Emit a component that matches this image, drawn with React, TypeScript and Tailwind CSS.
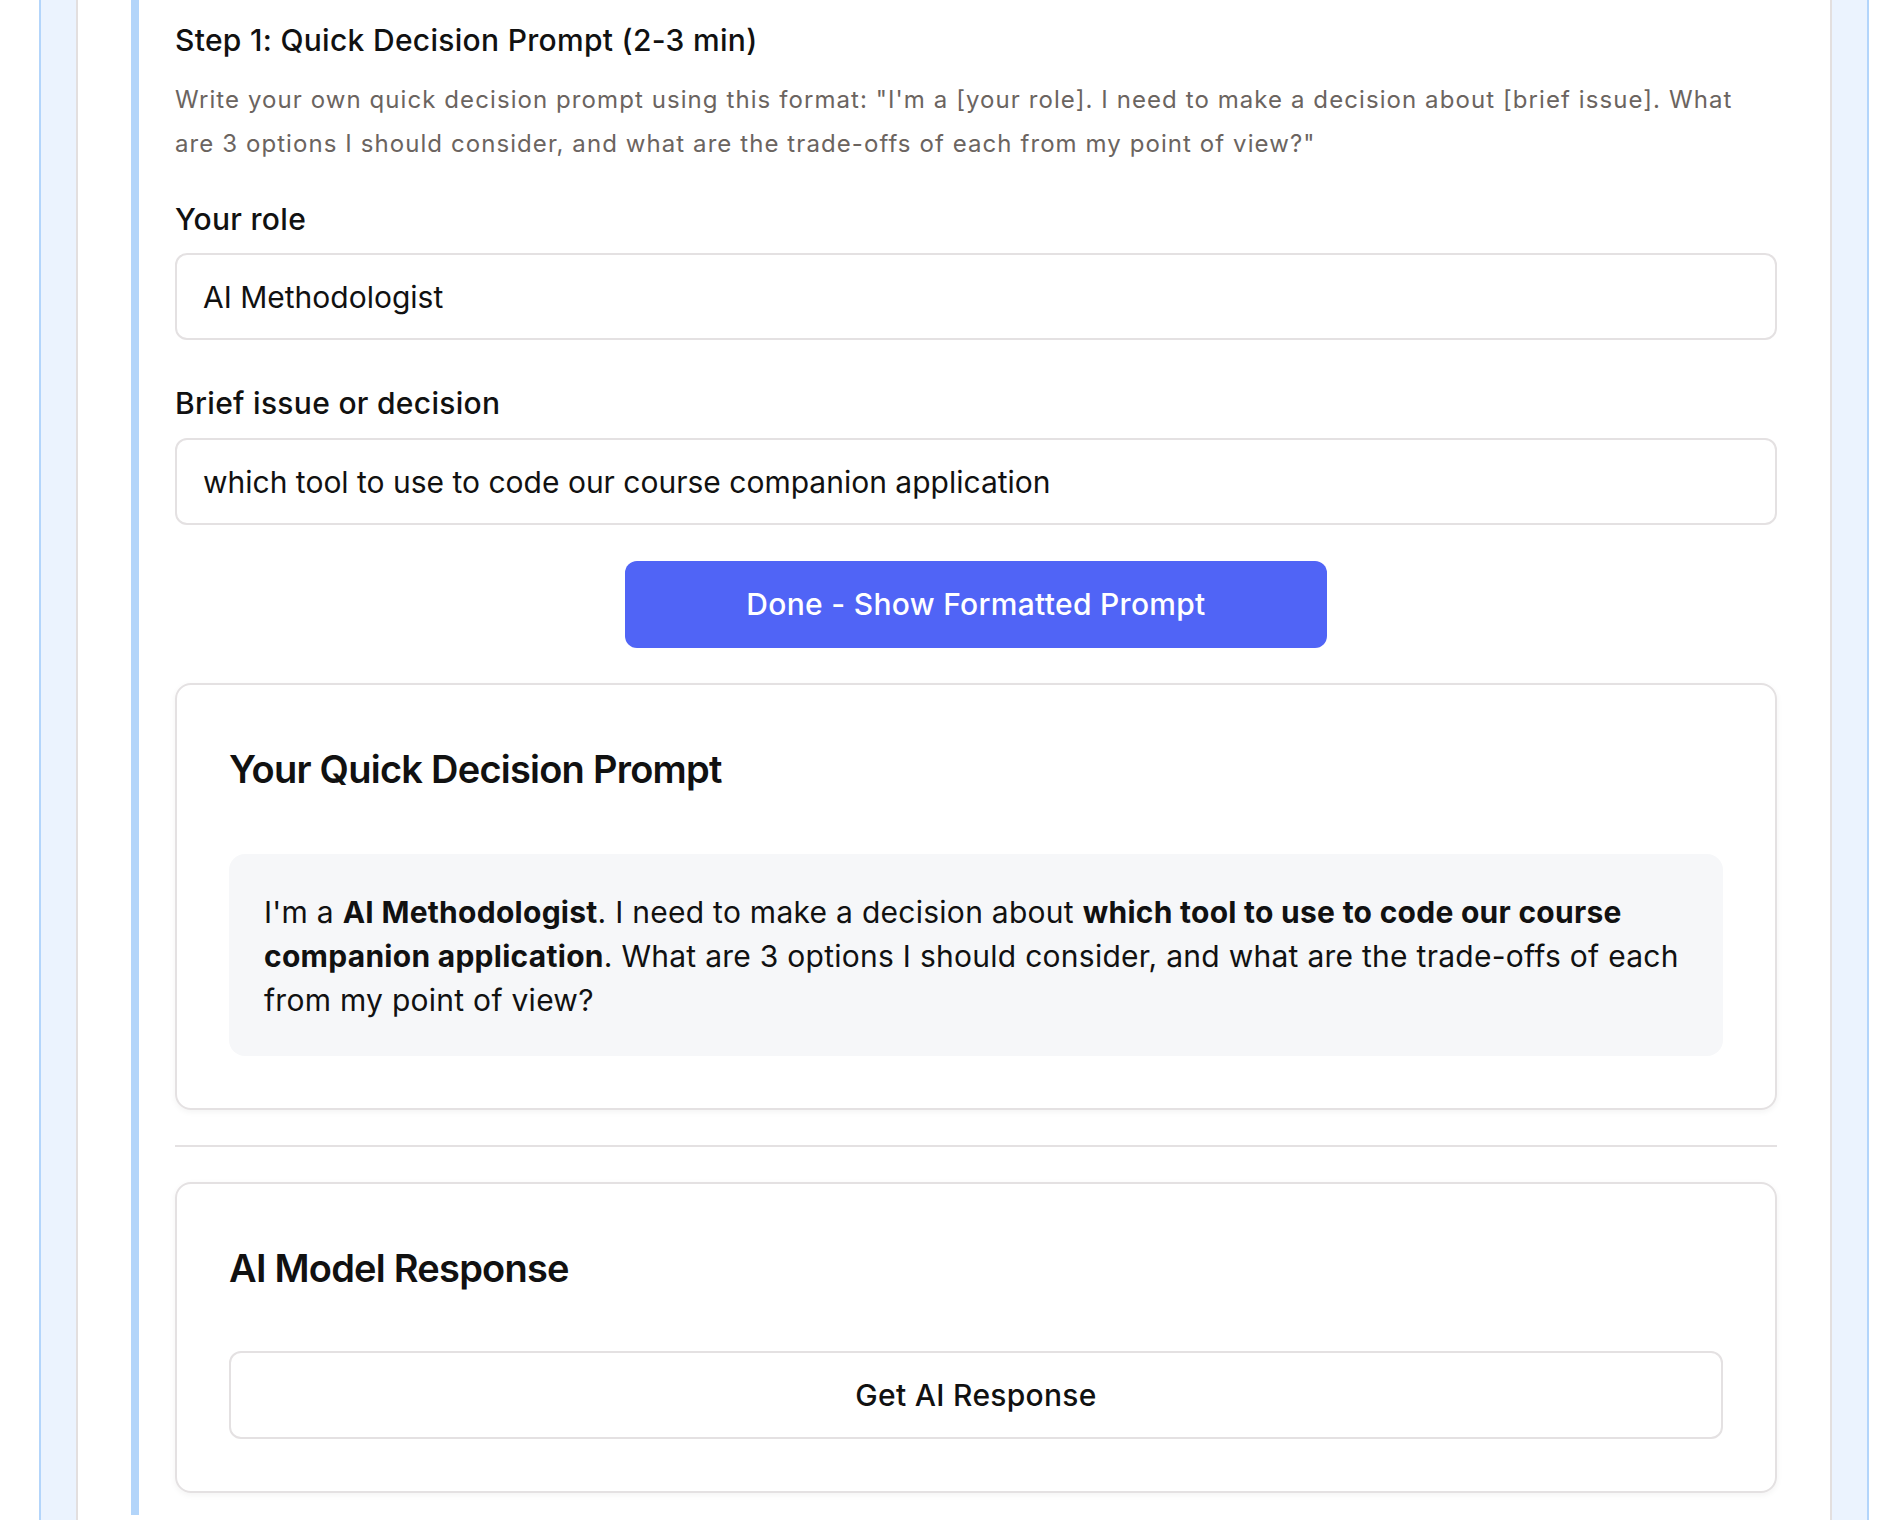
import React, { useState } from 'react';

const font = { fontFamily: 'Inter, "Noto Sans", sans-serif' };

export default function App() {
  const [role, setRole] = useState('AI Methodologist');
  const [issue, setIssue] = useState('which tool to use to code our course companion application');

  return (
    <div className="min-h-screen bg-white text-[#111111]" style={font}>
      <div className="ml-[39px] w-[1830px] border-x-2 border-[#b3d5fb] bg-[#ebf3fe] px-[35px]">
        <div className="border-x-2 border-[#e3dfdf] bg-white px-[53px] pb-[40px]">
          <section className="border-l-8 border-[#b3d5fa] pl-[36px] pt-[18px] pb-[22px]">
            <h3 className="text-[30px] leading-[45px] font-medium tracking-[0.01em]">Step 1: Quick Decision Prompt (2-3 min)</h3>
            <p className="mt-[15px] text-[24px] leading-[44px] tracking-[0.045em] text-[#6b6460]">
              Write your own quick decision prompt using this format: "I'm a [your role]. I need to make a decision about [brief issue]. What are 3 options I should consider, and what are the trade-offs of each from my point of view?"
            </p>

            <label className="mt-[31px] block text-[30px] leading-[45px] font-medium tracking-[0.01em]">Your role</label>
            <input
              value={role}
              onChange={e => setRole(e.target.value)}
              className="mt-[11px] block h-[87px] w-full rounded-[12px] border-2 border-[#e4e1e2] px-[26px] text-[30px] text-[#111111] outline-none"
            />

            <label className="mt-[41px] block text-[30px] leading-[45px] font-medium tracking-[0.01em]">Brief issue or decision</label>
            <input
              value={issue}
              onChange={e => setIssue(e.target.value)}
              className="mt-[12px] block h-[87px] w-full rounded-[12px] border-2 border-[#e4e1e2] px-[26px] text-[30px] text-[#111111] outline-none"
            />

            <div className="mt-[36px] flex justify-center">
              <button className="h-[87px] w-[702px] rounded-[12px] bg-[#5064f6] text-[30px] font-medium tracking-[0.01em] text-white">
                Done - Show Formatted Prompt
              </button>
            </div>

            <div className="mt-[35px] rounded-[16px] border-2 border-[#e4e1e2] p-[52px] shadow-[0_2px_6px_rgba(0,0,0,0.05)]">
              <h2 className="mt-[9px] text-[38px] leading-[46px] font-semibold tracking-[-0.02em]">Your Quick Decision Prompt</h2>
              <div className="mt-[62px] rounded-[16px] bg-[#f6f7f9] px-[35px] pt-[36px] pb-[34px] text-[30px] leading-[44px] tracking-[0.009em]">
                I'm a <strong className="font-bold">{role}</strong>. I need to make a decision about{' '}
                <strong className="font-bold">{issue}</strong>. What are 3 options I should consider, and what are the trade-offs of each from my point of view?
              </div>
            </div>

            <hr className="mt-[35px] border-t-2 border-[#e4e1e2]" />

            <div className="mt-[35px] rounded-[16px] border-2 border-[#e4e1e2] p-[52px] shadow-[0_2px_6px_rgba(0,0,0,0.05)]">
              <h2 className="mt-[9px] text-[38px] leading-[46px] font-semibold tracking-[-0.02em]">AI Model Response</h2>
              <button className="mt-[60px] block h-[88px] w-full rounded-[12px] border-2 border-[#e4e1e2] bg-white text-[30px] font-medium tracking-[0.01em] text-[#111111]">
                Get AI Response
              </button>
            </div>
          </section>
        </div>
      </div>
    </div>
  );
}
